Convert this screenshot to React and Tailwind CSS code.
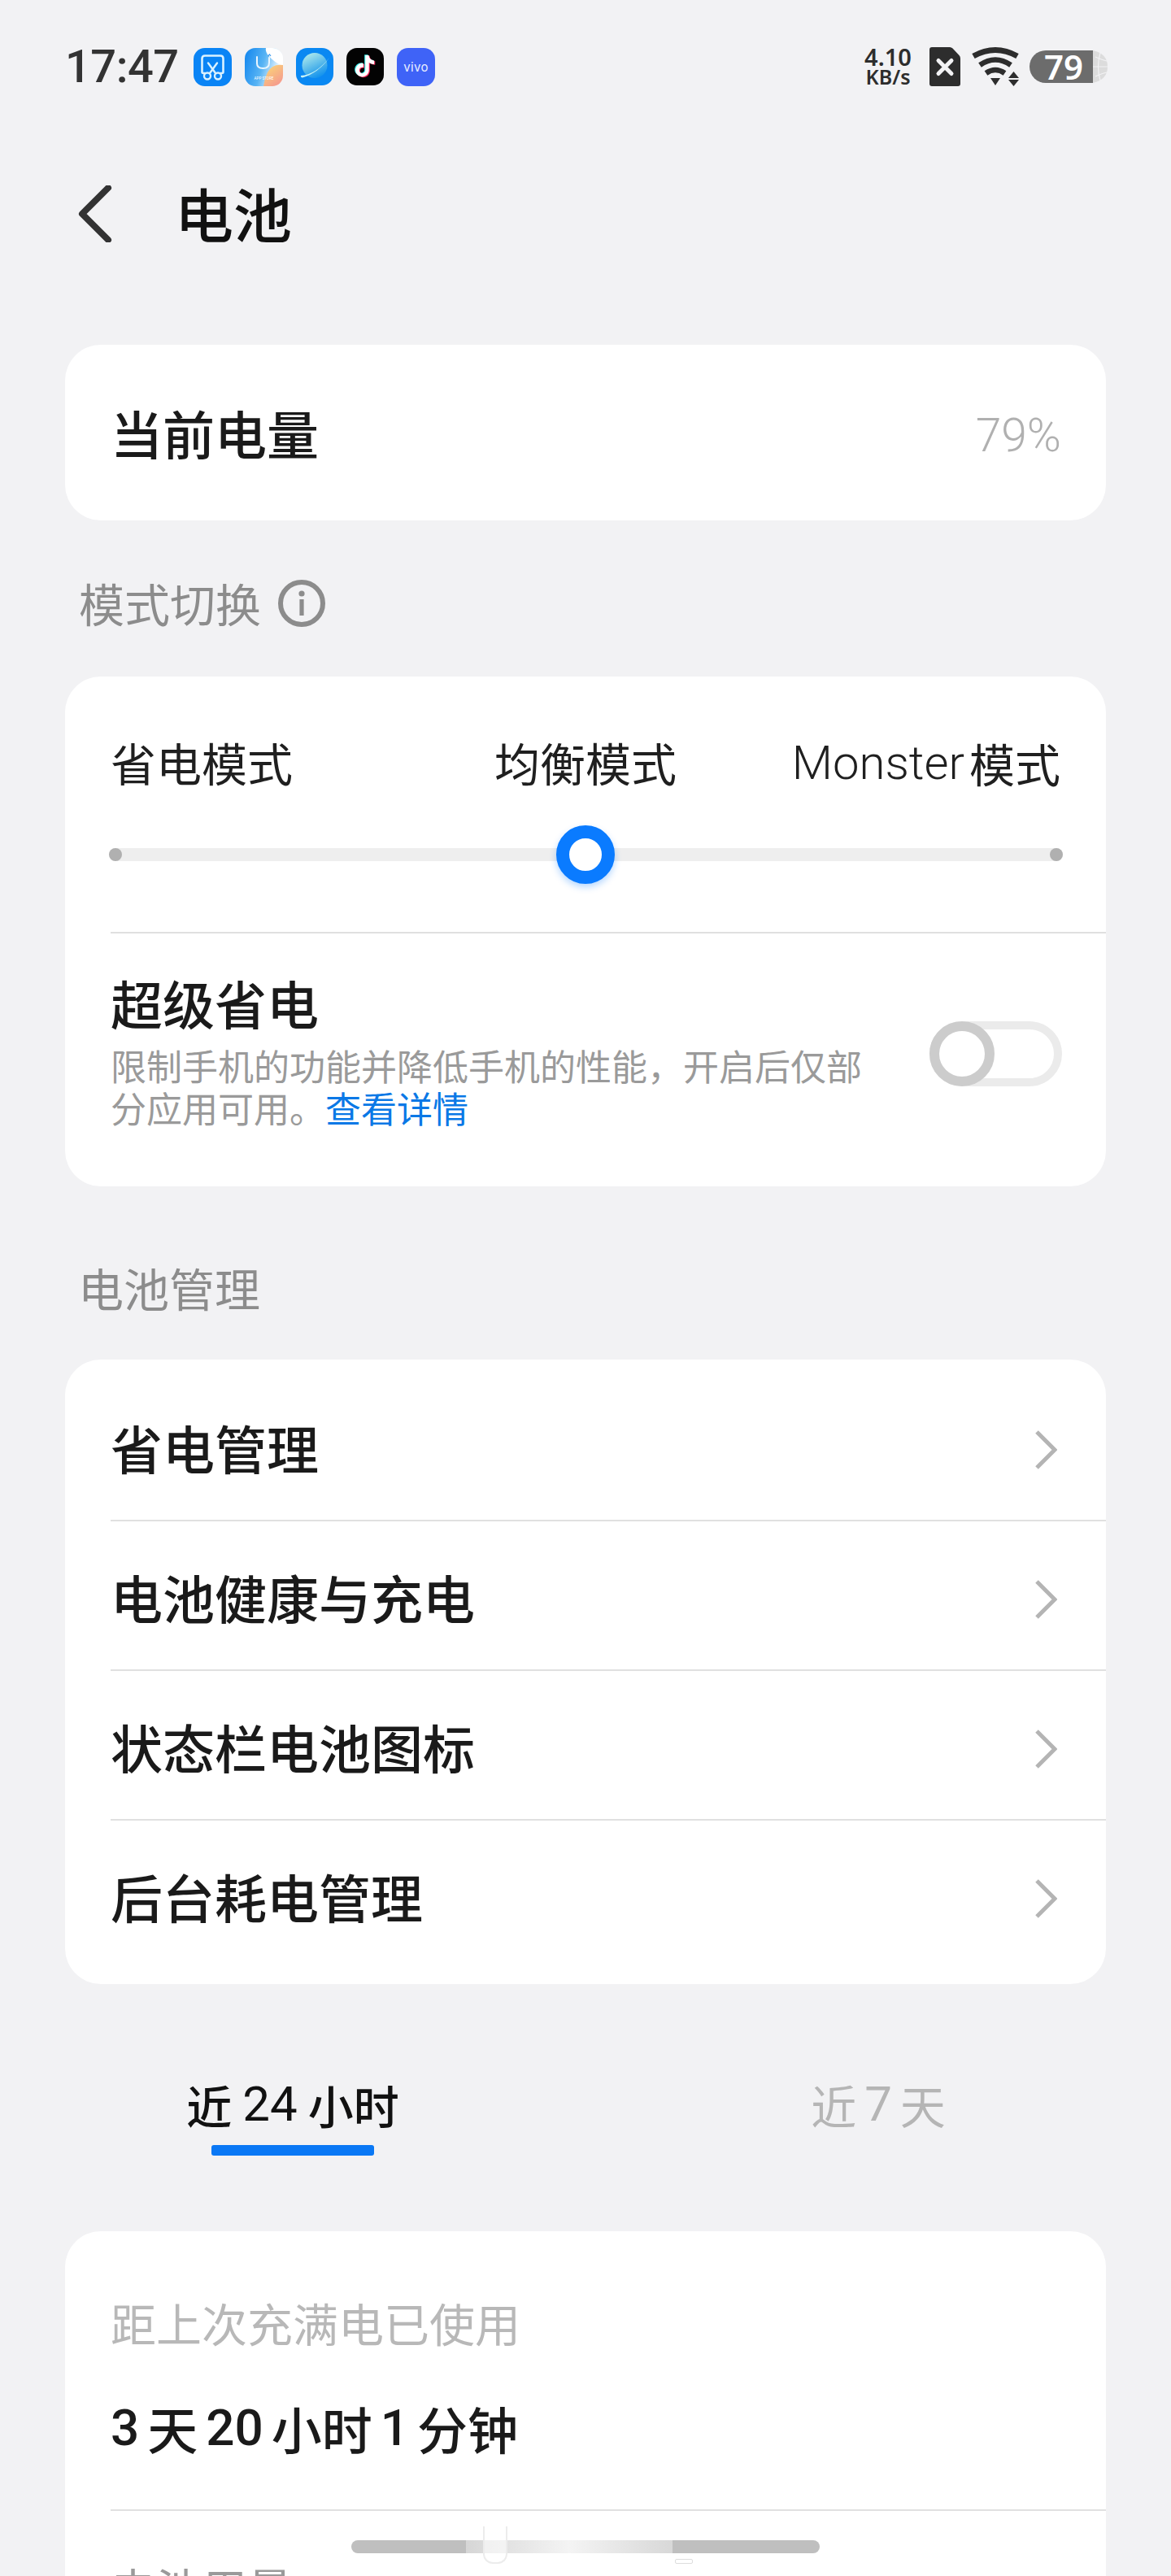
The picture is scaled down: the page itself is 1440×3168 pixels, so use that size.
import React from "react";

const TIKTOK = "M12.525.02c1.31-.02 2.61-.01 3.91-.02.08 1.53.63 3.09 1.75 4.17 1.12 1.11 2.7 1.62 4.24 1.79v4.03c-1.44-.05-2.89-.35-4.2-.97-.57-.26-1.1-.59-1.62-.93-.01 2.92.01 5.84-.02 8.75-.08 1.4-.54 2.79-1.35 3.94-1.31 1.92-3.58 3.17-5.91 3.21-1.43.08-2.86-.31-4.08-1.03-2.02-1.19-3.44-3.37-3.65-5.71-.02-.5-.03-1-.01-1.49.18-1.9 1.12-3.72 2.58-4.96 1.66-1.44 3.98-2.13 6.15-1.72.02 1.48-.04 2.96-.04 4.44-.99-.32-2.15-.23-3.02.37-.63.41-1.11 1.04-1.36 1.75-.21.51-.15 1.07-.14 1.61.24 1.64 1.82 3.02 3.5 2.87 1.12-.01 2.19-.66 2.77-1.61.19-.33.4-.67.41-1.06.1-1.79.06-3.57.07-5.36.01-4.03-.01-8.05.02-12.07z";

function ScreenshotIcon() {
  return (
    <svg viewBox="0 0 47 47" className="w-[47px] h-[47px]">
      <rect width="47" height="47" rx="14" fill="#0a84f5" />
      <path d="M14 31 L12 31 Q10.5 31 10.5 29.5 L10.5 13 Q10.5 9.5 14 9.5 L33 9.5 Q36.5 9.5 36.5 13 L36.5 29.5 Q36.5 31 35 31 L33 31" fill="none" stroke="#d9f1ff" strokeWidth="2.6" strokeLinecap="round" />
      <path d="M18 18.5 L27 31 M29 18.5 L20 31" stroke="#d9f1ff" strokeWidth="2.4" strokeLinecap="round" />
      <circle cx="17" cy="34.5" r="4" fill="none" stroke="#d9f1ff" strokeWidth="2.4" />
      <circle cx="30" cy="34.5" r="4" fill="none" stroke="#d9f1ff" strokeWidth="2.4" />
    </svg>
  );
}

function StoreIcon() {
  return (
    <svg viewBox="0 0 47 47" className="w-[47px] h-[47px]">
      <defs>
        <linearGradient id="storeBase" x1="0" y1="0" x2="1" y2="0.3">
          <stop offset="0" stopColor="#0f84ee" />
          <stop offset="0.55" stopColor="#58b4f4" />
          <stop offset="1" stopColor="#ffffff" />
        </linearGradient>
        <linearGradient id="storeWarm" x1="0" y1="0" x2="0.7" y2="1">
          <stop offset="0" stopColor="#fbdc74" />
          <stop offset="1" stopColor="#f59a8e" />
        </linearGradient>
        <clipPath id="storeClip"><rect width="47" height="47" rx="13" /></clipPath>
      </defs>
      <g clipPath="url(#storeClip)">
        <rect width="47" height="47" fill="url(#storeBase)" />
        <path d="M47 0 L47 22 Q36 18 28 8 Q25 3 26 0Z" fill="#ffffff" />
        <path d="M47 21 Q34 19 28 30 Q24 38 23 47 L47 47Z" fill="url(#storeWarm)" />
        <path d="M15 11 L15 19 Q15 25 22.5 25 Q30 25 30 18 L30 12" fill="none" stroke="#eaf6ff" strokeWidth="2" strokeLinecap="round" />
        <path d="M28.5 10 L30.5 8 L32 10" fill="none" stroke="#3d9bef" strokeWidth="1.2" />
        <text x="23.5" y="38.5" textAnchor="middle" fontSize="4.6" fill="#ffffff" fontFamily="Roboto, sans-serif">APP STORE</text>
      </g>
    </svg>
  );
}

function BrowserIcon() {
  return (
    <svg viewBox="0 0 46 46" className="w-[46px] h-[46px]">
      <defs>
        <linearGradient id="planet" x1="0.25" y1="0.05" x2="0.7" y2="0.95">
          <stop offset="0" stopColor="#a8e6ec" />
          <stop offset="0.6" stopColor="#4db3ea" />
          <stop offset="1" stopColor="#1292ee" />
        </linearGradient>
      </defs>
      <rect width="46" height="46" rx="14" fill="#0a88f2" />
      <circle cx="23" cy="21.5" r="15.5" fill="url(#planet)" />
      <path d="M6 34 Q24 33 41 12 Q27 31 8 36.5 Q5.5 36 6 34 Z" fill="#c8f2f6" />
    </svg>
  );
}

function TiktokIcon() {
  return (
    <svg viewBox="0 0 46 46" className="w-[46px] h-[46px]">
      <rect width="46" height="46" rx="13" fill="#030303" />
      <g transform="translate(9.5 9) scale(1.1)">
        <path d={TIKTOK} fill="#3cf0ee" transform="translate(-1 -0.6)" />
        <path d={TIKTOK} fill="#f3285a" transform="translate(1 0.7)" />
        <path d={TIKTOK} fill="#ffffff" />
      </g>
    </svg>
  );
}

function VivoIcon() {
  return (
    <div className="w-[47px] h-[47px] rounded-[14px] bg-[#3f63f7] flex items-center justify-center">
      <span className="font-['Inter',sans-serif] text-[15px] leading-none tracking-[0.3px] text-[#e8eeff]">vivo</span>
    </div>
  );
}

function SimIcon() {
  return (
    <svg viewBox="0 0 38 48" className="w-[38px] h-[48px]">
      <path d="M3 0 L25 0 Q27 0 28.5 1.5 L36.5 10 Q38 11.5 38 14 L38 45 Q38 48 35 48 L3 48 Q0 48 0 45 L0 3 Q0 0 3 0Z" fill="#2d2d2d" />
      <path d="M11 16.5 L27 32.5 M27 16.5 L11 32.5" stroke="#f2f2f4" strokeWidth="5" strokeLinecap="round" />
    </svg>
  );
}

function WifiIcon() {
  return (
    <svg viewBox="0 0 60 50" className="w-[60px] h-[50px]">
      <g fill="none" stroke="#2d2d2d" strokeLinecap="butt">
        <path d="M3 12 Q30 -3 57 12" strokeWidth="7" />
        <path d="M11 23 Q30 10 49 23" strokeWidth="6.5" />
        <path d="M18.5 33 Q30 25 41.5 33" strokeWidth="6.5" />
      </g>
      <path d="M24 39 L36 39 L30 48 Z" fill="#2d2d2d" />
      <path d="M46 39 L52.5 31 L59 39 Z" fill="#2d2d2d" />
      <path d="M46 41 L59 41 L52.5 49 Z" fill="#2d2d2d" />
    </svg>
  );
}

function BatteryIcon() {
  return (
    <div className="flex items-center w-[96px] h-[40px]">
      <div className="w-[78px] h-[40px] rounded-l-[20px] bg-[#6c6c6c] flex items-center justify-center">
        <span className="font-['Noto_Sans',sans-serif] font-semibold text-[42px] leading-none text-white pl-[6px]">79</span>
      </div>
      <svg viewBox="0 0 18 40" className="w-[18px] h-[40px]">
        <path d="M0 0 Q18 4 18 20 Q18 36 0 40 Z" fill="#dcdcdc" />
        <path d="M0 20 L18 20 M9 3 Q4 20 9 37 M3 8 Q12 12 17 13 M3 32 Q12 28 17 27" stroke="#f2f2f4" strokeWidth="1.2" fill="none" />
      </svg>
    </div>
  );
}

function Chevron() {
  return (
    <svg viewBox="0 0 28 50" className="w-[28px] h-[50px] mr-[10px] mt-[8px]">
      <path d="M3 3 L25 25 L3 47" fill="none" stroke="#b4b4b4" strokeWidth="5" strokeLinejoin="miter" />
    </svg>
  );
}

function InfoIcon() {
  return (
    <svg viewBox="0 0 58 58" className="w-[58px] h-[58px]">
      <circle cx="29" cy="29" r="26" fill="none" stroke="#8c8c8c" strokeWidth="6" />
      <circle cx="29" cy="17" r="3.6" fill="#8c8c8c" />
      <rect x="26.4" y="24" width="5.2" height="20" fill="#8c8c8c" />
    </svg>
  );
}

function Row({ label, first, last }) {
  return (
    <div className={`flex items-center justify-between pl-[56px] pr-[50px] ${first ? "h-[199px] pt-[15px]" : last ? "h-[201px] pb-[17px]" : "h-[184px]"} ${last ? "" : "relative after:absolute after:left-[56px] after:right-0 after:bottom-0 after:h-[2px] after:bg-[#e0e0e0]"}`}>
      <span className="text-[64px] leading-none font-medium text-[#1a1a1a]">{label}</span>
      <Chevron />
    </div>
  );
}

export default function App() {
  const rows = ["省电管理", "电池健康与充电", "状态栏电池图标", "后台耗电管理"];
  return (
    <div className="relative w-[1440px] h-[3168px] overflow-hidden bg-[#f2f2f4] font-['Noto_Sans_CJK_SC',sans-serif]">
      {/* status bar */}
      <div className="h-[164px] pl-[80px] pr-[78px] flex items-center justify-between">
        <div className="flex items-center">
          <span className="font-['Roboto',sans-serif] font-medium text-[56px] leading-none tracking-[-0.5px] text-[#333333] w-[158px]">17:47</span>
          <div className="flex items-center gap-[16px]">
            <ScreenshotIcon />
            <StoreIcon />
            <BrowserIcon />
            <TiktokIcon />
            <VivoIcon />
          </div>
        </div>
        <div className="flex items-center">
          <div className="flex flex-col items-center w-[60px] font-['Noto_Sans',sans-serif] font-semibold text-[#2d2d2d] mr-[21px]">
            <span className="text-[29px] leading-[25px]">4.10</span>
            <span className="text-[25px] leading-[25px]">KB/s</span>
          </div>
          <SimIcon />
          <div className="ml-[13px] mr-[12px]"><WifiIcon /></div>
          <BatteryIcon />
        </div>
      </div>

      {/* header */}
      <div className="h-[198px] pl-[96px] flex items-center">
        <svg viewBox="0 0 42 70" className="w-[42px] h-[70px]">
          <path d="M37 3 L5 35 L37 67" fill="none" stroke="#333333" strokeWidth="8" strokeLinecap="round" strokeLinejoin="round" />
        </svg>
        <span className="ml-[77px] pb-[4px] text-[72px] leading-none font-medium text-[#111111]">电池</span>
      </div>

      {/* current charge */}
      <div className="mt-[62px] mx-[80px] h-[216px] rounded-[44px] bg-white flex items-center justify-between pl-[56px] pr-[55px]">
        <span className="pb-[2px] text-[64px] leading-none font-medium text-[#1a1a1a]">当前电量</span>
        <span className="pt-[6px] font-['Roboto',sans-serif] font-light text-[57px] leading-none text-[#b0b0b0]">79%</span>
      </div>

      {/* mode section */}
      <div className="mt-[69px] h-[64px] ml-[97px] flex items-center">
        <span className="text-[56px] leading-none text-[#8c8c8c]">模式切换</span>
        <span className="ml-[21px] pt-[2px]"><InfoIcon /></span>
      </div>
      <div className="mt-[59px] mx-[80px] h-[627px] rounded-[44px] bg-white overflow-hidden">
        <div className="h-[316px] border-b-[2px] border-[#e0e0e0] ml-[56px]">
          <div className="h-[135px] pt-[75px] pr-[56px] flex items-start justify-between text-[56px] leading-[60px] text-[#1f1f1f]">
            <span className="w-[330px]">省电模式</span>
            <span>均衡模式</span>
            <span className="w-[330px] flex items-center justify-end whitespace-nowrap pt-[1px]">
              <span className="font-['Roboto',sans-serif] text-[58px] font-light">Monster</span>
              <span className="ml-[6px]">模式</span>
            </span>
          </div>
          <div className="relative mt-[76px] mr-[53px] ml-[-2px] h-[16px] rounded-full bg-[#eeeeee] flex items-center justify-between">
            <span className="w-[16px] h-[16px] rounded-full bg-[#b0b0b0]" />
            <span className="w-[16px] h-[16px] rounded-full bg-[#b0b0b0]" />
            <span className="absolute left-[550px] top-[-28px] w-[72px] h-[72px] rounded-full border-[16px] border-[#0a7bff] bg-white shadow-[0_4px_8px_rgba(10,123,255,0.3)]" />
          </div>
        </div>
        <div className="pl-[56px] pr-[54px] flex items-start justify-between">
          <div className="w-[930px] pt-[48px]">
            <div className="text-[64px] leading-[72px] font-medium text-[#1a1a1a]">超级省电</div>
            <div className="mt-[16px] text-[44px] leading-[52px] text-[#9a9a9a]">
              限制手机的功能并降低手机的性能，开启后仅部分应用可用。<span className="text-[#0a78e6]">查看详情</span>
            </div>
          </div>
          <div className="relative mt-[108px] w-[163px] h-[80px] rounded-full border-[10px] border-[#ebebeb]">
            <span className="absolute left-[-10px] top-[-10px] w-[80px] h-[80px] rounded-full border-[12px] border-[#cccccc] bg-white" />
          </div>
        </div>
      </div>

      {/* battery management */}
      <div className="mt-[92px] h-[64px] ml-[96px] flex items-center">
        <span className="text-[56px] leading-none text-[#8c8c8c]">电池管理</span>
      </div>
      <div className="mt-[57px] mx-[80px] rounded-[44px] bg-white overflow-hidden">
        {rows.map((r, i) => (
          <Row key={r} label={r} first={i === 0} last={i === rows.length - 1} />
        ))}
      </div>

      {/* tabs */}
      <div className="mt-[116px] grid grid-cols-2">
        <div className="flex flex-col items-center">
          <span className="h-[64px] flex items-center text-[56px] leading-none font-medium text-[#111111] whitespace-nowrap">
            近<span className="mx-[13px] font-['Roboto',sans-serif] font-normal text-[60px]">24</span>小时
          </span>
          <span className="mt-[18px] w-[200px] h-[13px] rounded-[3px] bg-[#0a78f5]" />
        </div>
        <div className="flex flex-col items-center">
          <span className="h-[64px] flex items-center text-[56px] leading-none text-[#b5b5b5] whitespace-nowrap">
            近<span className="mx-[10px] font-['Roboto',sans-serif] text-[60px]">7</span>天
          </span>
        </div>
      </div>

      {/* usage */}
      <div className="mt-[93px] mx-[80px] rounded-[44px] bg-white">
        <div className="pl-[56px] h-[342px]">
          <div className="pt-[80px] text-[56px] leading-[64px] text-[#b8b8b8]">距上次充满电已使用</div>
          <div className="mt-[66px] flex items-center text-[62px] leading-[64px] font-medium text-[#1a1a1a] whitespace-nowrap">
            <span className="font-['Roboto',sans-serif]">3</span>
            <span className="mx-[10px]">天</span>
            <span className="font-['Roboto',sans-serif]">20</span>
            <span className="mx-[10px]">小时</span>
            <span className="font-['Roboto',sans-serif]">1</span>
            <span className="ml-[10px]">分钟</span>
          </div>
        </div>
        <div className="ml-[56px] h-[2px] bg-[#e0e0e0]" />
        <div className="pl-[56px] pt-[62px] text-[56px] leading-[64px] text-[#9a9a9a]">电池用量</div>
      </div>

      {/* gesture bar with smudged middle */}
      <div className="absolute left-[432px] top-[3124px] w-[576px] h-[16px] rounded-full bg-[#bfbfbf]" />
      <div className="absolute left-[573px] top-[3124px] w-[254px] h-[16px] bg-gradient-to-r from-[#d6d6d6] via-[#f4f4f4] to-[#d8d8d8]" />
      <div className="absolute left-[594px] top-[3107px] w-[30px] h-[46px] rounded-b-[12px] border-x-[2px] border-b-[2px] border-[#ececec] bg-white/60" />
      <div className="absolute left-[830px] top-[3147px] w-[22px] h-[6px] rounded-[2px] border border-[#dddddd] bg-white" />
    </div>
  );
}
